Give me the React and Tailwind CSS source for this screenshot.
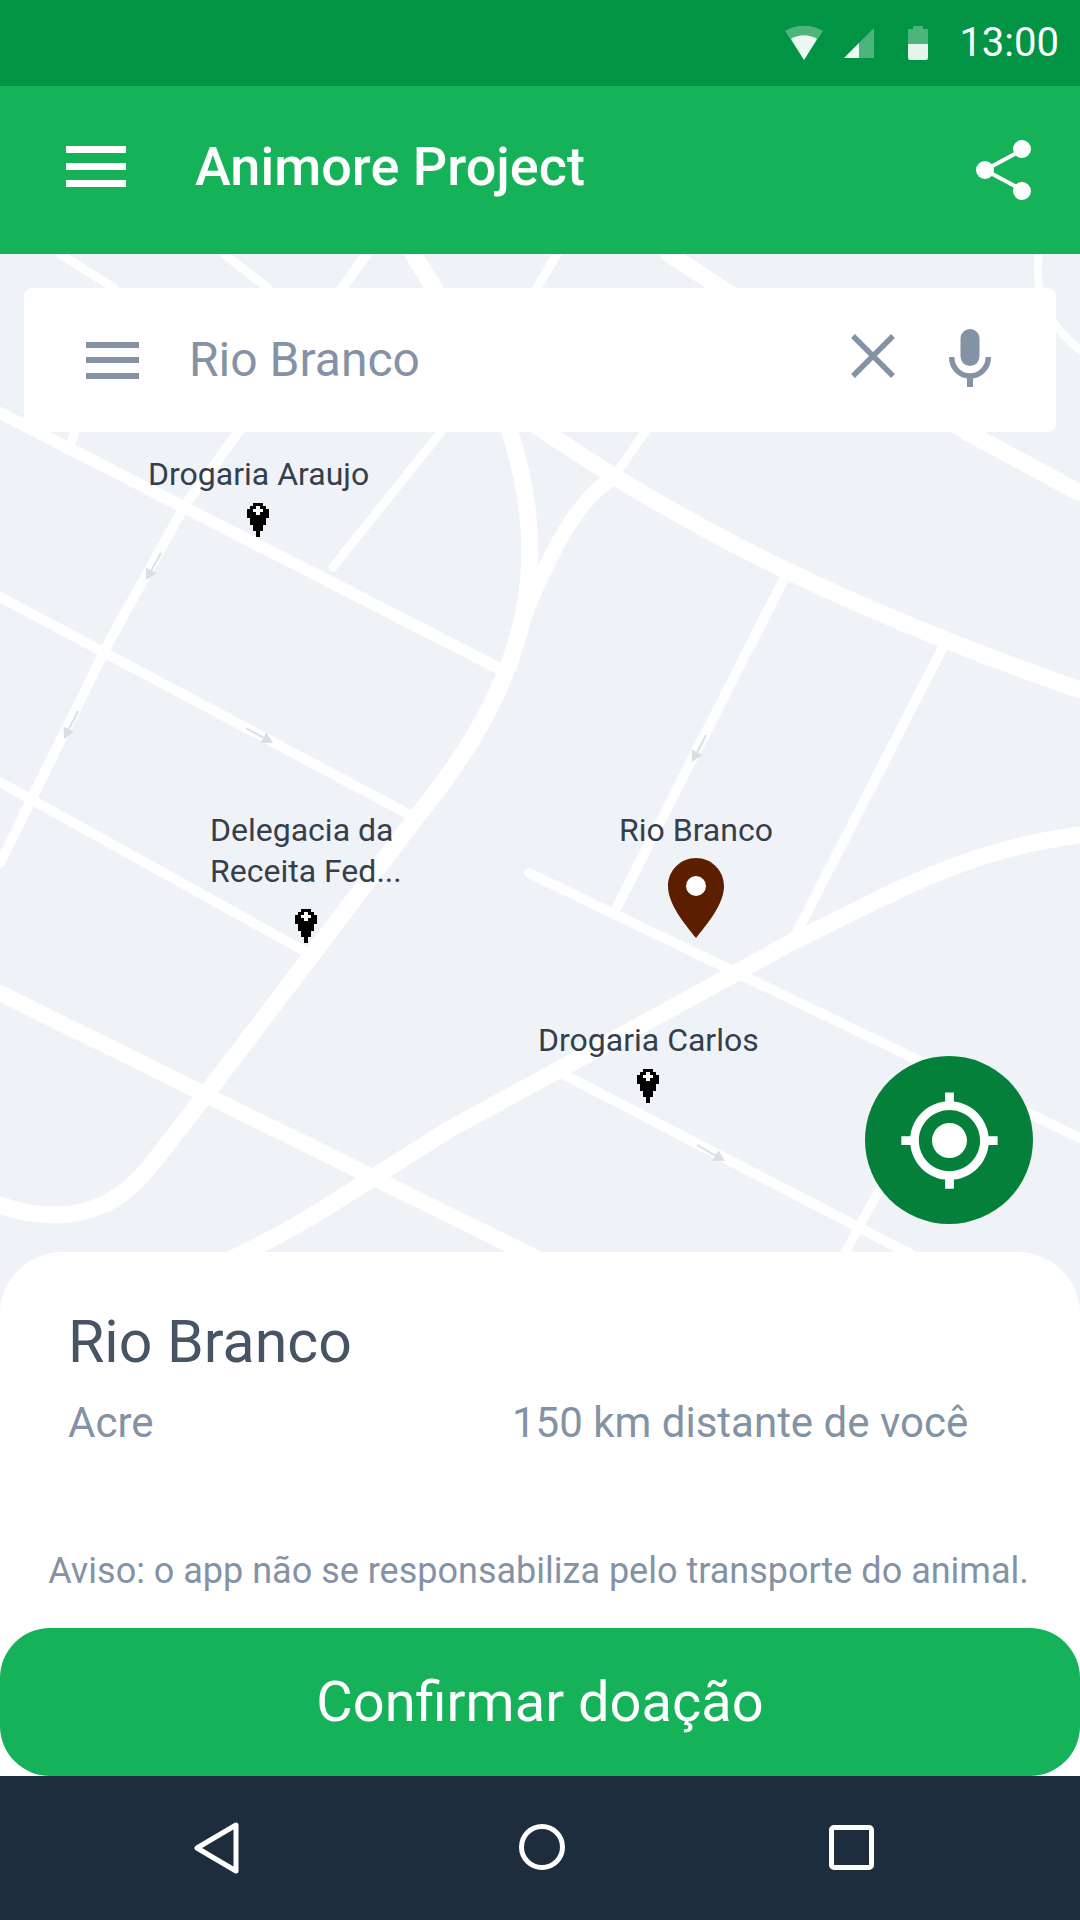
import React from "react";

// ruas do mapa: [path, largura]
const roads = [
  ["M60 254L114 288", 9],
  ["M224 254L268 288", 9],
  ["M75 432L68 450", 9],
  ["M367 254L238 432L184 507L110 640L0 863", 10],
  ["M0 413L502 670", 12],
  ["M333 567L441 432", 9],
  ["M557 254L537 288", 9],
  ["M645 432L615 475", 9],
  ["M0 597L410 815", 10],
  ["M0 782L306 952", 10],
  ["M786 575L617 907", 10],
  ["M945 643L793 940", 10],
  ["M529 873L1080 1138", 10],
  ["M561 1073L910 1254", 10],
  ["M890 1170L840 1262", 9],
  ["M1039 254C1034 285 1042 320 1080 350", 8],
  ["M0 993L540 1260", 16],
  ["M669 254L721 288L967 432L1080 493", 17],
  ["M535 425C640 495 780 585 1080 690", 17],
  ["M612 478C580 500 560 535 535 590L517 635", 15],
  ["M413 254L434 288L510 432C535 510 535 580 517 640C495 715 450 775 418 815L207 1093L151 1165C120 1205 85 1215 55 1215C30 1215 15 1211 0 1205", 17],
  ["M1080 835C960 850 880 900 790 943L736 973L540 1080L448 1130L374 1177C330 1205 290 1232 225 1262", 17],
];

// setas de sentido: [x1, y1, x2, y2]
const arrows = [
  [161, 553, 146, 580],
  [78, 711, 64, 739],
  [246, 728, 273, 743],
  [697, 1145, 725, 1161],
  [706, 735, 692, 762],
];

function MapDrawing() {
  return (
    <svg className="absolute left-0 top-0" width="1080" height="1100" viewBox="0 254 1080 1100" fill="none">
      {roads.map(([d, w], i) => (
        <path key={i} d={d} stroke="#ffffff" strokeWidth={w} strokeLinecap="round" strokeLinejoin="round" />
      ))}
      {arrows.map(([x1, y1, x2, y2], i) => {
        const len = Math.hypot(x2 - x1, y2 - y1);
        const ux = (x2 - x1) / len;
        const uy = (y2 - y1) / len;
        const bx = x2 - ux * 11;
        const by = y2 - uy * 11;
        return (
          <g key={i}>
            <line x1={x1} y1={y1} x2={bx} y2={by} stroke="#dcdfe2" strokeWidth="2" />
            <polygon points={`${x2},${y2} ${bx - uy * 6},${by + ux * 6} ${bx + uy * 6},${by - ux * 6}`} fill="#dcdfe2" />
          </g>
        );
      })}
    </svg>
  );
}

function PharmacyPin({ left, top }) {
  // pino pixelado do mapa
  const rows = [
    [2, 3],
    [1, 5],
    [0, 7],
    [0, 7],
    [0, 7],
    [1, 5],
    [1, 5],
    [2, 3],
    [2, 3],
    [3, 1],
    [3, 1],
  ];
  return (
    <svg
      className="absolute"
      style={{ left, top }}
      width="22"
      height="36"
      viewBox="0 0 7 11"
      shapeRendering="crispEdges"
    >
      {rows.map(([x, w], y) => (
        <rect key={y} x={x} y={y} width={w} height="1" fill="#000000" />
      ))}
      <rect x="3" y="1" width="1" height="3" fill="#ffffff" />
      <rect x="2" y="2" width="3" height="1" fill="#ffffff" />
    </svg>
  );
}

function MapLabel({ left, top, children }) {
  return (
    <div
      className="absolute text-[32px] leading-[41px] text-[#343f4b] whitespace-pre"
      style={{ left, top }}
    >
      {children}
    </div>
  );
}

function StatusIcons() {
  return (
    <div className="flex items-center">
      <svg width="40" height="36" viewBox="0 0 40 36" className="mr-[19px]">
        <path d="M1 6C11 -1 29 -1 39 6L20 35Z" fill="#ffffff" fillOpacity="0.3" />
        <path d="M7 14C15 9 25 9 33 14L20 35Z" fill="#ffffff" fillOpacity="0.9" />
      </svg>
      <svg width="32" height="32" viewBox="0 0 32 32" className="mr-[32px]">
        <path d="M1 31L31 1V31Z" fill="#ffffff" fillOpacity="0.3" />
        <path d="M1 31L16 16V31Z" fill="#ffffff" fillOpacity="0.9" />
      </svg>
      <svg width="22" height="36" viewBox="0 0 22 36" className="mr-[30px]">
        <path d="M1 5Q1 4 2 4H6V1H16V4H20Q21 4 21 5V19H1Z" fill="#ffffff" fillOpacity="0.3" />
        <path d="M1 19H21V33Q21 35 19 35H3Q1 35 1 33Z" fill="#ffffff" fillOpacity="0.9" />
      </svg>
    </div>
  );
}

function NavBar() {
  return (
    <div className="relative h-[144px] bg-[#1e2d3d]">
      <svg className="absolute left-[191px] top-[44px]" width="50" height="56" viewBox="0 0 50 56" fill="none">
        <path d="M45 5V51L6 28Z" stroke="#ffffff" strokeWidth="5" strokeLinejoin="round" />
      </svg>
      <div className="absolute left-[519px] top-[48px] h-[46px] w-[46px] rounded-full border-[5px] border-white" />
      <div className="absolute left-[829px] top-[49px] h-[45px] w-[45px] rounded-[5px] border-[5px] border-white" />
    </div>
  );
}

export default function App() {
  return (
    <div
      className="flex h-[1920px] w-[1080px] flex-col overflow-hidden bg-white"
      style={{ fontFamily: "Roboto, sans-serif" }}
    >
      {/* status bar */}
      <div className="flex h-[86px] shrink-0 items-center justify-end bg-[#009444] pr-[21px]">
        <StatusIcons />
        <span className="text-[40px] leading-[86px] text-white">13:00</span>
      </div>

      {/* app bar */}
      <div className="flex h-[168px] shrink-0 items-center bg-[#16b25a] pl-[66px] pr-[49px]">
        <div className="mb-[7px] flex w-[60px] flex-col gap-[10px]">
          <span className="h-[7px] bg-white" />
          <span className="h-[7px] bg-white" />
          <span className="h-[7px] bg-white" />
        </div>
        <h1 className="mb-[7px] ml-[69px] flex-1 text-[54px] font-medium text-white">Animore Project</h1>
        <svg width="55" height="60" viewBox="0 0 55 60">
          <path d="M46 10L9 30L46 50" fill="none" stroke="#ffffff" strokeWidth="4" />
          <circle cx="46" cy="9" r="9" fill="#ffffff" />
          <circle cx="9" cy="30" r="9" fill="#ffffff" />
          <circle cx="46" cy="51" r="9" fill="#ffffff" />
        </svg>
      </div>

      {/* mapa */}
      <div className="relative h-[1070px] shrink-0 overflow-hidden bg-[#eff2f7]">
        <MapDrawing />

        <MapLabel left={148} top={200}>Drogaria Araujo</MapLabel>
        <PharmacyPin left={247} top={248} />

        <MapLabel left={210} top={556}>{"Delegacia da\nReceita Fed..."}</MapLabel>
        <PharmacyPin left={295} top={654} />

        <MapLabel left={619} top={556}>Rio Branco</MapLabel>
        <svg className="absolute left-[668px] top-[604px]" width="56" height="80" viewBox="0 0 56 80">
          <path
            d="M28 0C12.5 0 0 12.5 0 28C0 46 16 65 28 80C40 65 56 46 56 28C56 12.5 43.5 0 28 0Z"
            fill="#5b1f00"
          />
          <circle cx="28" cy="28" r="10" fill="#ffffff" />
        </svg>

        <MapLabel left={538} top={766}>Drogaria Carlos</MapLabel>
        <PharmacyPin left={637} top={814} />

        {/* busca */}
        <div className="absolute left-[24px] top-[34px] flex h-[144px] w-[1032px] items-center rounded-[8px] bg-white pl-[62px]">
          <div className="flex w-[53px] flex-col gap-[9.5px]">
            <span className="h-[6px] bg-[#8492a6]" />
            <span className="h-[6px] bg-[#8492a6]" />
            <span className="h-[6px] bg-[#8492a6]" />
          </div>
          <span className="ml-[50px] flex-1 text-[48px] text-[#8492a6]">Rio Branco</span>
          <svg width="44" height="44" viewBox="0 0 44 44" className="mb-[8px] mr-[54px]">
            <path d="M2 2L42 42M42 2L2 42" stroke="#8492a6" strokeWidth="5.5" fill="none" />
          </svg>
          <svg width="42" height="58" viewBox="0 0 42 58" className="mb-[4px] mr-[65px]">
            <rect x="11.5" y="0" width="19" height="37" rx="9.5" fill="#8492a6" />
            <path d="M2.75 28V28.5A18.25 18.5 0 0 0 39.25 28.5V28" stroke="#8492a6" strokeWidth="5.5" fill="none" />
            <rect x="18" y="46" width="6" height="12" fill="#8492a6" />
          </svg>
        </div>

        {/* localizar */}
        <div className="absolute left-[865px] top-[802px] flex h-[168px] w-[168px] items-center justify-center rounded-full bg-[#04803a]">
          <svg width="105" height="105" viewBox="0 0 24 24" fill="#ffffff">
            <path d="M12 8c-2.21 0-4 1.79-4 4s1.79 4 4 4 4-1.79 4-4-1.79-4-4-4zm8.94 3c-.46-4.17-3.77-7.48-7.94-7.94V1h-2v2.06C6.83 3.52 3.52 6.83 3.06 11H1v2h2.06c.46 4.17 3.77 7.48 7.94 7.94V23h2v-2.06c4.17-.46 7.48-3.77 7.94-7.94H23v-2h-2.06zM12 19c-3.87 0-7-3.13-7-7s3.13-7 7-7 7 3.13 7 7-3.13 7-7 7z" />
          </svg>
        </div>
      </div>

      {/* detalhes */}
      <div className="relative -mt-[72px] flex h-[376px] shrink-0 flex-col rounded-t-[62px] bg-white">
        <div className="pl-[68px] pt-[58px] text-[59px] leading-[64px] text-[#475463]">Rio Branco</div>
        <div className="mt-[25px] flex pl-[68px] text-[42px] leading-[48px] text-[#8492a6]">
          <span className="w-[444px]">Acre</span>
          <span>150 km distante de você</span>
        </div>
        <div className="mt-[104px] pr-[3px] text-center text-[36px] leading-[40px] text-[#8492a6]">
          Aviso: o app não se responsabiliza pelo transporte do animal.
        </div>
      </div>

      {/* confirmar */}
      <button className="h-[148px] shrink-0 rounded-[50px] bg-[#16b25a] text-[56px] text-white">
        Confirmar doação
      </button>

      <NavBar />
    </div>
  );
}
